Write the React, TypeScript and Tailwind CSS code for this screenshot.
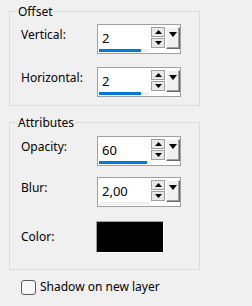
import { ReactNode } from 'react';

function Arrow({ dir }: { dir: 'up' | 'down' }) {
  return (
    <svg width="7" height="4" viewBox="0 0 7 4" className="block">
      {dir === 'up' ? <polygon points="0,4 7,4 3.5,0" fill="#000" /> : <polygon points="0,0 7,0 3.5,4" fill="#000" />}
    </svg>
  );
}

function SpinInput({ value, fill }: { value: string; fill: number }) {
  return (
    <div className="flex w-[84px] h-[30px] border border-[#a0a0a0] bg-white">
      <div className="flex flex-col w-[52px]">
        <div className="flex-1 flex items-center pl-[4px] pt-[3px] text-[13px] leading-none">{value}</div>
        <div className="ml-[1px] mb-[1px] w-[50px] h-[3px] bg-[#f0f0f0]">
          <div className="h-full bg-[#0078d7]" style={{ width: `${fill}px` }} />
        </div>
      </div>
      <div className="ml-[1px] pt-[2px] flex flex-col gap-[1px]">
        <div className="w-[14px] h-[10px] border border-[#a0a0a0] bg-[#e8e8e8] flex items-center justify-center">
          <Arrow dir="up" />
        </div>
        <div className="w-[14px] h-[10px] border border-[#a0a0a0] bg-[#e8e8e8] flex items-center justify-center">
          <Arrow dir="down" />
        </div>
      </div>
      <div className="ml-[1px] mt-[2px] w-[14px] h-[22px] border-t border-l border-white border-r border-b border-r-[#696969] border-b-[#696969] bg-[#f0f0f0] shadow-[inset_-1px_-1px_0_#a0a0a0] flex justify-center pt-[4px]">
        <svg width="8" height="5" viewBox="0 0 8 5" className="block">
          <polygon points="0,0 8,0 4,5" fill="#000" />
        </svg>
      </div>
    </div>
  );
}

function Row({ label, children, className = '' }: { label: string; children: ReactNode; className?: string }) {
  return (
    <div className={`flex items-start ${className}`}>
      <span className="w-[76px] pt-[3px] leading-[16px]">{label}</span>
      {children}
    </div>
  );
}

export default function App() {
  return (
    <div className="w-[252px] h-[306px] bg-[#f0f0f0] pl-[9px] pt-[3px] text-[12px] text-black font-['Noto_Sans',sans-serif]">
      {/* Offset */}
      <fieldset className="w-[191px] border border-[#dcdcdc]">
        <legend className="ml-[7px] px-[1px] leading-[17px]">Offset</legend>
        <div className="pl-[11px] pt-[4px] pb-[8px] flex flex-col gap-[13px]">
          <Row label="Vertical:">
            <SpinInput value="2" fill={42} />
          </Row>
          <Row label="Horizontal:">
            <SpinInput value="2" fill={42} />
          </Row>
        </div>
      </fieldset>

      {/* Attributes */}
      <fieldset className="mt-[8px] w-[191px] border border-[#dcdcdc]">
        <legend className="ml-[7px] px-[1px] leading-[17px]">Attributes</legend>
        <div className="pl-[11px] pt-[5px] pb-[16px] flex flex-col">
          <Row label="Opacity:">
            <SpinInput value="60" fill={48} />
          </Row>
          <Row label="Blur:" className="mt-[11px]">
            <SpinInput value="2,00" fill={0} />
          </Row>
          <div className="mt-[14px] flex items-center">
            <span className="w-[75px] leading-[16px]">Color:</span>
            <div className="w-[68px] h-[32px] bg-black border-t border-l border-[#a0a0a0] border-r border-b border-r-white border-b-white" />
          </div>
        </div>
      </fieldset>

      {/* Shadow checkbox */}
      <label className="mt-[9px] pl-[12px] flex items-center">
        <span className="w-[15px] h-[15px] border border-[#5a5a5a] rounded-[3px] bg-[#f7f7f7]" />
        <span className="ml-[4px] leading-[16px]">Shadow on new layer</span>
      </label>
    </div>
  );
}
